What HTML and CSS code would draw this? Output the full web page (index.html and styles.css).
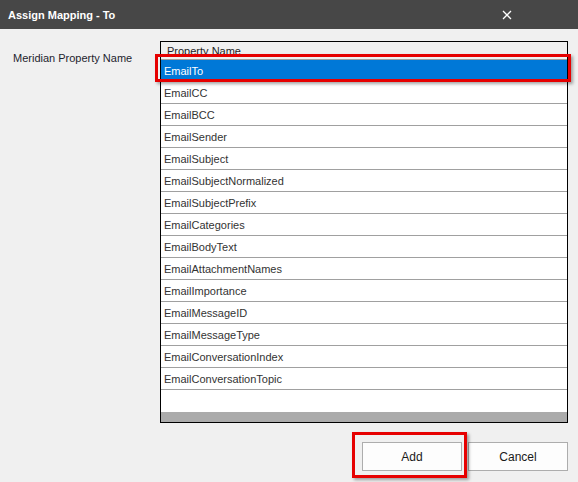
FILE: index.html
```html
<!DOCTYPE html>
<html>
<head>
<meta charset="utf-8">
<link rel="stylesheet" href="styles.css">
</head>
<body>
<div class="window">
  <div class="titlebar">
    <span class="title">Assign Mapping - To</span>
    <svg class="close" width="10" height="10" viewBox="0 0 10 10"><path d="M1 1L9 9M9 1L1 9" stroke="#ffffff" stroke-width="1.3" fill="none"/></svg>
  </div>
  <div class="content">
    <div class="form">
      <div class="label">Meridian Property Name</div>
      <div class="listbox">
        <div class="header">Property Name</div>
        <div class="rows">
          <div class="row selected">EmailTo<span class="mark mark-row"></span></div>
          <div class="row">EmailCC</div>
          <div class="row">EmailBCC</div>
          <div class="row">EmailSender</div>
          <div class="row">EmailSubject</div>
          <div class="row">EmailSubjectNormalized</div>
          <div class="row">EmailSubjectPrefix</div>
          <div class="row">EmailCategories</div>
          <div class="row">EmailBodyText</div>
          <div class="row">EmailAttachmentNames</div>
          <div class="row">EmailImportance</div>
          <div class="row">EmailMessageID</div>
          <div class="row">EmailMessageType</div>
          <div class="row">EmailConversationIndex</div>
          <div class="row">EmailConversationTopic</div>
          <div class="row empty"></div>
        </div>
        <div class="scrollband"></div>
      </div>
    </div>
    <div class="buttons">
      <div class="btn-wrap"><button class="btn">Add</button><span class="mark mark-btn"></span></div>
      <button class="btn">Cancel</button>
    </div>
  </div>
</div>
</body>
</html>
```
FILE: styles.css
```css
* { box-sizing: border-box; }
html, body { margin: 0; padding: 0; }
body {
  width: 578px;
  height: 482px;
  background: #f0f0f0;
  font-family: "Liberation Sans", Arial, sans-serif;
  font-size: 11px;
  color: #1e1e1e;
  overflow: hidden;
}
.titlebar {
  height: 29px;
  background: #474747;
  display: flex;
  align-items: center;
  justify-content: space-between;
  padding: 0 66px 0 8px;
}
.title {
  color: #ffffff;
  font-weight: bold;
  font-size: 11px;
}
.close { display: block; }
.content {
  padding: 12px 10px 0 13px;
}
.form {
  display: flex;
}
.label {
  width: 147px;
  padding-top: 10px;
  line-height: 14px;
  color: #1e1e2e;
}
.listbox {
  width: 408px;
  height: 382px;
  border: 1px solid #000000;
  background: #ffffff;
  display: flex;
  flex-direction: column;
}
.header {
  height: 18px;
  background: #f0f0f0;
  border-bottom: 1px solid #a0a0a0;
  padding-left: 6px;
  padding-top: 1px;
  line-height: 17px;
  color: #1e1e1e;
}
.rows { flex: 1; }
.row {
  position: relative;
  height: 22px;
  border-bottom: 1px solid #a0a0a0;
  padding-left: 3px;
  padding-top: 2px;
  line-height: 19px;
  color: #333333;
}
.row.selected {
  background: #0078d7;
  border-bottom-color: #0078d7;
  color: #ffffff;
}
.row.empty { border-bottom: none; }
.scrollband {
  height: 10px;
  background: #ababab;
}
.buttons {
  display: flex;
  justify-content: flex-end;
  gap: 6px;
  margin-top: 19px;
}
.btn-wrap { position: relative; }
.btn {
  display: block;
  width: 100px;
  height: 29px;
  border: 1px solid #adadad;
  background: #fdfdfd;
  font-family: "Liberation Sans", Arial, sans-serif;
  font-size: 12px;
  color: #1a1a1a;
  padding: 0;
}
.mark {
  position: absolute;
  border: 3px solid #e60000;
  box-shadow: 2px 2px 3px rgba(0, 0, 0, 0.35);
  pointer-events: none;
}
.mark-row {
  left: -6px;
  top: -6px;
  right: -4px;
  bottom: -1px;
}
.mark-btn {
  left: -10px;
  top: -10px;
  right: -5px;
  bottom: -7px;
}
```
